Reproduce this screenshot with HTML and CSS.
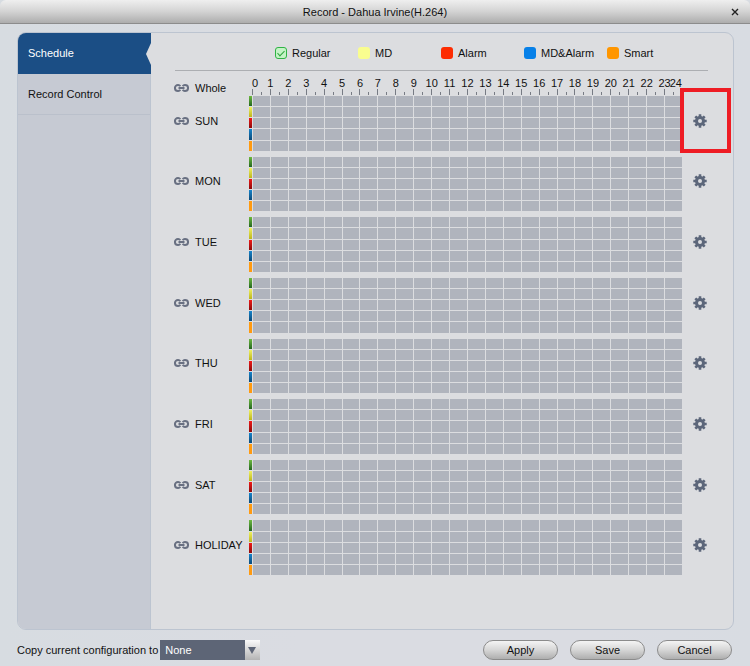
FILE: index.html
```html
<!DOCTYPE html>
<html lang="en">
<head>
    <meta charset="UTF-8">
    <meta name="viewport" content="width=device-width, initial-scale=1.0">
    <title>Record - Dahua Irvine(H.264)</title>
    <link rel="stylesheet" href="styles.css">
</head>
<body>
    <svg class="symbols" aria-hidden="true">
        <symbol id="icon-link" viewBox="0 0 16 10">
            <path d="M6.8 3.1A3.2 3.2 0 0 0 4.4 1.8H4.2a3.2 3.2 0 0 0 0 6.4h.2a3.2 3.2 0 0 0 2.4-1.3M9.2 3.1A3.2 3.2 0 0 1 11.6 1.8h.2a3.2 3.2 0 0 1 0 6.4h-.2a3.2 3.2 0 0 1-2.4-1.3M4.8 5h6.4" fill="none" stroke="#697082" stroke-width="2.1"/>
        </symbol>
        <symbol id="icon-gear" viewBox="-7 -7 14 14">
            <circle r="3.5" fill="none" stroke="#5c667a" stroke-width="3"/>
            <path d="M0-6.7V-4M0 4V6.7M-6.7 0H-4M4 0H6.7M-4.7-4.7L-3-3M3 3L4.7 4.7M-4.7 4.7L-3 3M3-3L4.7-4.7" stroke="#5c667a" stroke-width="2.6"/>
        </symbol>
    </svg>

    <header class="title-bar">
        <h1>Record - Dahua Irvine(H.264)</h1>
        <button class="close" type="button" aria-label="Close">
            <svg viewBox="0 0 8 8"><path d="M1 1L7 7M7 1L1 7" stroke="#222" stroke-width="1.4"/></svg>
        </button>
    </header>

    <main class="panel">
        <nav class="sidebar">
            <a class="active" href="#schedule">Schedule</a>
            <a href="#record-control">Record Control</a>
        </nav>

        <section class="schedule" id="schedule">
            <div class="legend">
                <label><input type="checkbox" class="swatch regular" checked>Regular</label>
                <label><input type="checkbox" class="swatch md">MD</label>
                <label><input type="checkbox" class="swatch alarm">Alarm</label>
                <label><input type="checkbox" class="swatch md-alarm">MD&amp;Alarm</label>
                <label><input type="checkbox" class="swatch smart">Smart</label>
            </div>

            <div class="row ruler-row">
                <div class="day-name"><svg class="link"><use href="#icon-link"/></svg>Whole</div>
                <div class="ruler" id="ruler"></div>
            </div>

            <div class="days" id="days"></div>
        </section>
    </main>

    <footer class="footer">
        <label for="copyTo">Copy current configuration to</label>
        <div class="select-box">
            <select id="copyTo">
                <option>None</option>
            </select>
        </div>
        <div class="actions">
            <button type="button">Apply</button>
            <button type="button">Save</button>
            <button type="button">Cancel</button>
        </div>
    </footer>

    <script src="script.js"></script>
</body>
</html>
```
FILE: styles.css
```css
*,
*::before,
*::after {
    box-sizing: border-box;
}

body {
    margin: 0;
    min-height: 100vh;
    display: flex;
    flex-direction: column;
    background: linear-gradient(to right, #d7dce1, #dadce2 40%, #dadce2 80%, #d8dce2);
    font-family: "Liberation Sans", Arial, sans-serif;
    font-size: 11px;
    line-height: 14px;
    color: #111;
}

button,
select {
    font: inherit;
    color: inherit;
}

.symbols {
    display: none;
}

/* Title bar */
.title-bar {
    position: relative;
    height: 24px;
    display: flex;
    align-items: center;
    justify-content: center;
    background: linear-gradient(#efefef, #d3d3d3 50%, #adadad);
    border-bottom: 1px solid #8c8c8c;
    border-radius: 6px 6px 0 0;
}

.title-bar h1 {
    margin: 0;
    font-size: 11px;
    font-weight: normal;
}

.close {
    position: absolute;
    right: 8px;
    top: 5px;
    width: 14px;
    height: 14px;
    padding: 3px;
    border: none;
    background: none;
}

.close svg {
    display: block;
    width: 8px;
    height: 8px;
}

/* Main panel */
.panel {
    flex: 1;
    display: flex;
    margin: 8px 16px 0 17px;
    border: 1px solid #bcc4d0;
    border-radius: 9px;
    background: #dcdde0;
    overflow: hidden;
}

.sidebar {
    width: 133px;
    flex: none;
    background: #c6cad3;
    border-right: 1px solid #bcc4d0;
}

.sidebar a {
    display: flex;
    align-items: center;
    height: 41px;
    padding-left: 10px;
    border-bottom: 1px solid #bac0cb;
    color: #111;
    text-decoration: none;
}

.sidebar a.active {
    position: relative;
    margin-right: -1px;
    background: #1b4e85;
    border-color: #1b4e85;
    color: #fff;
}

/* Notch pointing at the selected tab */
.sidebar a.active::after {
    content: "";
    position: absolute;
    right: 0;
    top: 10px;
    border: solid transparent;
    border-width: 11px 5px 11px 0;
    border-right-color: #dcdde0;
}

.schedule {
    flex: 1;
    display: flex;
    flex-direction: column;
    padding: 0 15px 54px 23px;
}

.legend {
    display: grid;
    grid-template-columns: repeat(5, 83px);
    align-items: center;
    height: 38px;
    padding-left: 100px;
    margin: 0 10px 0 1px;
    border-bottom: 1px solid #acaeb2;
}

.legend label {
    display: flex;
    align-items: center;
    gap: 5px;
    padding-top: 3px;
}

.swatch {
    appearance: none;
    width: 12px;
    height: 12px;
    margin: 0;
    border-radius: 3px;
}

.regular {
    border: 1px solid #2fb344;
    background: #c4f3c6;
    display: flex;
    justify-content: center;
}

.regular:checked::after {
    content: "";
    width: 4px;
    height: 7px;
    border: solid #2fa53f;
    border-width: 0 1px 1px 0;
    transform: rotate(45deg);
    margin-top: 1px;
}

.md { background: #f9fd8f; }
.alarm { background: #fd2c02; }
.md-alarm { background: #0780e8; }
.smart { background: #ff9600; }

.row {
    display: grid;
    grid-template-columns: 75px 1fr 36px;
}

.day-name {
    display: flex;
    align-items: center;
    gap: 6px;
    padding-bottom: 5px;
}

.link {
    width: 15px;
    height: 10px;
}

/* Hour ruler */
.ruler-row {
    height: 25px;
}

.ruler-row .day-name {
    padding: 8px 0 0;
}

.ruler {
    display: grid;
    grid-template-columns: repeat(24, 1fr);
    margin-left: 3px;
}

.hour {
    position: relative;
    display: flex;
    align-items: flex-end;
}

.hour span {
    position: absolute;
    top: 5px;
    left: -10px;
    width: 21px;
    text-align: center;
}

.hour:first-child span {
    left: 0;
    text-align: left;
}

.hour span.last {
    left: auto;
    right: 0;
    text-align: right;
}

.hour::before,
.hour::after {
    content: "";
    width: 1px;
    height: 6px;
    background: #777b84;
    margin-bottom: 1px;
}

.hour::after {
    height: 3px;
    margin-left: 8px;
}

/* One block of five lanes per day */
.days {
    flex: 1;
    display: grid;
    grid-template-rows: repeat(8, 1fr);
    gap: 6px;
}

.lanes {
    display: grid;
    grid-template-rows: repeat(5, 1fr);
    gap: 1px;
}

.lane {
    display: grid;
    grid-template-columns: 3px repeat(24, 1fr);
    column-gap: 1px;
}

.lane i {
    background: #b0b4bd;
}

.lane:nth-child(1) i:first-child { background: linear-gradient(#6cb83f, #23661f); }
.lane:nth-child(2) i:first-child { background: linear-gradient(#eef060, #bcb51c); }
.lane:nth-child(3) i:first-child { background: linear-gradient(#f01818, #8c0b0b); }
.lane:nth-child(4) i:first-child { background: linear-gradient(#1583cb, #0b4a78); }
.lane:nth-child(5) i:first-child { background: #ff9a10; }

.settings {
    position: relative;
    align-self: center;
    justify-self: center;
    width: 14px;
    height: 14px;
    margin-bottom: 5px;
    padding: 0;
    border: none;
    background: none;
    cursor: pointer;
}

.settings svg {
    display: block;
    width: 14px;
    height: 14px;
}

/* Red frame around the highlighted gear */
.highlight::after {
    content: "";
    position: absolute;
    left: -13px;
    top: -26px;
    width: 51px;
    height: 65px;
    border: 4px solid #ee1c24;
}

/* Footer */
.footer {
    display: flex;
    align-items: center;
    padding: 10px 18px 6px 17px;
}

.select-box {
    position: relative;
    width: 100px;
    margin-left: 2px;
}

.select-box select {
    appearance: none;
    display: block;
    width: 100%;
    height: 20px;
    padding: 0 20px 0 5px;
    border: none;
    border-radius: 0;
    background: linear-gradient(#fafafa, #b4b4b4) right / 15px 100% no-repeat #5d6576;
    color: #fff;
}

.select-box::after {
    content: "";
    position: absolute;
    right: 4px;
    top: 7px;
    border: solid transparent;
    border-width: 7px 4px 0;
    border-top-color: #5d6576;
    pointer-events: none;
}

.actions {
    display: flex;
    gap: 12px;
    margin-left: auto;
}

.actions button {
    width: 75px;
    height: 20px;
    padding: 0;
    border: 1px solid #8b8b8b;
    border-radius: 10px;
    background: linear-gradient(#f4f4f4, #d6d6d6 50%, #aeaeae);
    cursor: pointer;
}
```
FILE: script.js
```js
const dayNames = ['SUN', 'MON', 'TUE', 'WED', 'THU', 'FRI', 'SAT', 'HOLIDAY'];

// Hour marks 0-24
let marks = '';
for (let h = 0; h < 24; h++) {
    marks += `<div class="hour"><span>${h}</span>${h === 23 ? '<span class="last">24</span>' : ''}</div>`;
}
document.getElementById('ruler').innerHTML = marks;

// Each lane has a colour key followed by 24 hour cells
const lane = '<div class="lane">' + '<i></i>'.repeat(25) + '</div>';

document.getElementById('days').innerHTML = dayNames.map((day, index) => `
    <div class="row">
        <div class="day-name"><svg class="link"><use href="#icon-link"/></svg>${day}</div>
        <div class="lanes">${lane.repeat(5)}</div>
        <button type="button" class="settings${index === 0 ? ' highlight' : ''}" aria-label="${day} settings">
            <svg><use href="#icon-gear"/></svg>
        </button>
    </div>`).join('');
```
